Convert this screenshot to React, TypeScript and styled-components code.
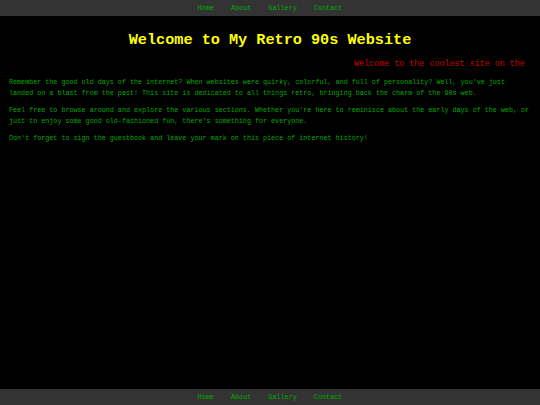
import styled, { createGlobalStyle } from 'styled-components';

const GlobalStyle = createGlobalStyle`
  html, body {
    margin: 0;
    padding: 0;
    height: 100%;
    background: #000;
  }
  #root {
    height: 100%;
  }
`;

const Page = styled.div`
  display: flex;
  flex-direction: column;
  height: 100vh;
  overflow: hidden;
  background: #000;
  font-family: 'Liberation Mono', 'Courier New', monospace;
`;

const NavBar = styled.nav`
  height: 16px;
  flex-shrink: 0;
  background: #333;
  display: flex;
  align-items: center;
  justify-content: center;
  gap: 17px;
`;

const NavLink = styled.a`
  color: #00aa00;
  font-size: 6.8px;
  text-decoration: none;
`;

const Main = styled.main`
  flex: 1;
  padding: 0 9px;
`;

const Title = styled.h1`
  margin: 15px 0 0;
  text-align: center;
  color: #ffff00;
  font-size: 15.2px;
  font-weight: bold;
  line-height: 18px;
`;

const Ticker = styled.div`
  margin-top: 10px;
  color: #c80000;
  font-size: 8.4px;
  line-height: 10px;
  white-space: nowrap;
  overflow: hidden;
  text-indent: 345px;
`;

const Para = styled.p`
  margin: 6px 0 0;
  color: #00aa00;
  font-size: 6.72px;
  line-height: 11px;

  &:first-of-type {
    margin-top: 8px;
  }
`;

const Footer = styled.footer`
  height: 16px;
  flex-shrink: 0;
  background: #333;
  display: flex;
  align-items: center;
  justify-content: center;
  gap: 17px;
`;

const links = ['Home', 'About', 'Gallery', 'Contact'];

export default function App() {
  return (
    <Page>
      <GlobalStyle />
      <NavBar>
        {links.map((l) => (
          <NavLink key={l} href="#">{l}</NavLink>
        ))}
      </NavBar>
      <Main>
        <Title>Welcome to My Retro 90s Website</Title>
        <Ticker>Welcome to the coolest site on the</Ticker>
        <Para>
          Remember the good old days of the internet? When websites were quirky, colorful, and full of personality? Well, you've just landed on a blast from the past! This site is dedicated to all things retro, bringing back the charm of the 90s web.
        </Para>
        <Para>
          Feel free to browse around and explore the various sections. Whether you're here to reminisce about the early days of the web, or just to enjoy some good old-fashioned fun, there's something for everyone.
        </Para>
        <Para>
          Don't forget to sign the guestbook and leave your mark on this piece of internet history!
        </Para>
      </Main>
      <Footer>
        {links.map((l) => (
          <NavLink key={l} href="#">{l}</NavLink>
        ))}
      </Footer>
    </Page>
  );
}
